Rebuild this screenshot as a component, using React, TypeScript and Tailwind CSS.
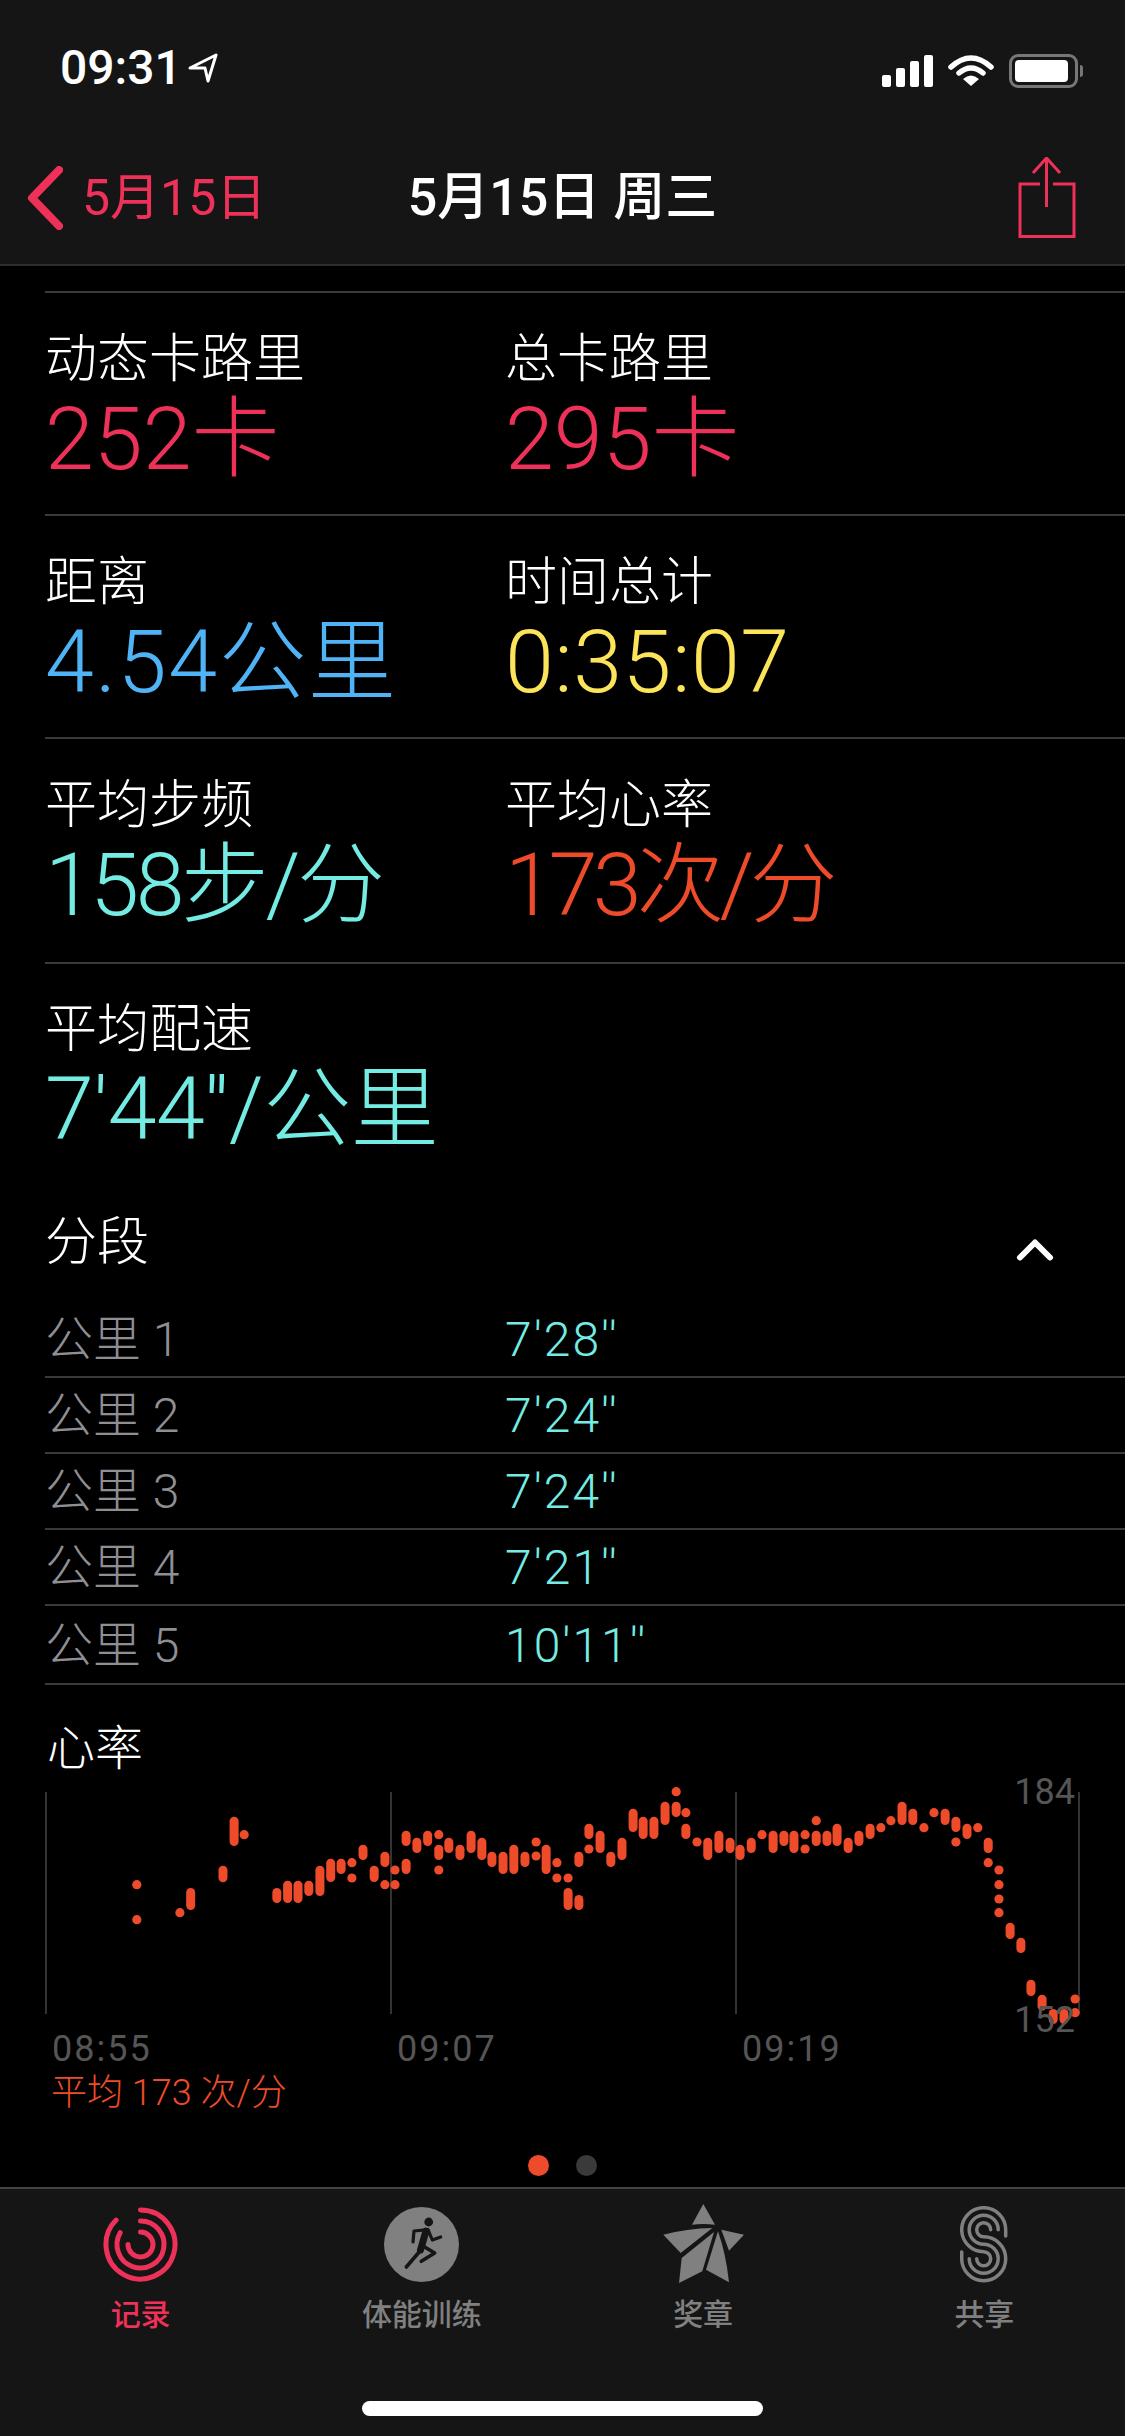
import { ChevronUp } from "lucide-react";

type Mark = [number, number, number?];

// chart marks read off the reference: [x, top, bottom], one y only means a dot
const leftMarks: Mark[] = [
	[381, 557], [381, 662], [501, 641], [531, 567, 633], [621, 500, 550], [652, 353, 441], [680, 407],
	[771, 567, 612], [801, 545, 612], [830, 545, 612], [860, 545, 591], [891, 500, 591], [921, 479, 549],
	[950, 479, 525], [980, 491], [980, 537], [1011, 437, 483], [1042, 500, 549], [1072, 458, 504], [1072, 557],
	[1100, 513], [1100, 557], [1131, 395, 441], [1131, 479, 525], [1161, 416, 462], [1191, 395, 441], [1222, 407],
	[1222, 437, 483], [1222, 513], [1250, 416, 462], [1281, 437, 483], [1312, 395, 462], [1342, 416, 483],
	[1370, 458, 504], [1401, 458, 525], [1431, 437, 525], [1462, 458, 504], [1493, 429], [1493, 471],
	[1521, 437, 525], [1551, 491], [1551, 537],
];

const rightMarks: Mark[] = [
	[17, 567, 633], [17, 537], [47, 588, 633], [47, 458, 504], [75, 450], [75, 374, 420], [106, 395, 462],
	[136, 458, 504], [167, 416, 483], [198, 329, 399], [226, 353, 420], [256, 353, 420], [287, 308, 378],
	[318, 278], [318, 308, 354], [345, 341], [345, 374, 420], [376, 429], [406, 416, 483], [437, 395, 462],
	[468, 416, 462], [496, 437, 483], [527, 416, 462], [557, 407], [588, 395, 462], [618, 395, 441],
	[646, 395, 462], [677, 407], [677, 450], [708, 395, 441], [708, 365], [738, 395, 441], [766, 374, 441],
	[797, 416, 462], [827, 395, 441], [858, 374, 420], [888, 386], [916, 365], [947, 308, 378], [977, 329, 378],
	[1008, 386], [1036, 341], [1067, 329, 378], [1097, 353, 399], [1097, 429], [1128, 374, 420], [1158, 386],
	[1187, 416, 462], [1187, 491], [1217, 513], [1217, 557], [1217, 600], [1217, 641], [1248, 671, 720],
	[1278, 716, 762], [1306, 842, 891], [1337, 887, 935], [1368, 930, 975], [1398, 930, 975], [1429, 900], [1429, 941],
];

const splits = [
	{ name: "公里 1", pace: "7'28''" },
	{ name: "公里 2", pace: "7'24''" },
	{ name: "公里 3", pace: "7'24''" },
	{ name: "公里 4", pace: "7'21''" },
	{ name: "公里 5", pace: "10'11''" },
];

function Stat({ label, value, color }: { label: string; value: string; color: string }) {
	return (
		<div>
			<div className="text-[52px] leading-[60px] font-light text-white">{label}</div>
			<div className={`mt-[4px] text-[88px] leading-[90px] font-light whitespace-nowrap ${color}`}>{value}</div>
		</div>
	);
}

function StatusBar() {
	return (
		<div className="flex h-[108px] items-end justify-between pr-[42px] pl-[60px] pb-[20px]">
			<div className="flex items-center gap-[6px]">
				<span className="text-[48px] leading-[40px] font-medium text-white">09:31</span>
				<svg width="30" height="30" viewBox="0 0 30 30" fill="none">
					<path d="M2 15 L28 2 L20 28 L17 15 Z" stroke="#fff" strokeWidth="3" strokeLinejoin="round" />
				</svg>
			</div>
			<div className="flex items-center gap-[15px]">
				<div className="flex items-end gap-[5px]">
					<div className="h-[12px] w-[9px] rounded-[2px] bg-white" />
					<div className="h-[19px] w-[9px] rounded-[2px] bg-white" />
					<div className="h-[26px] w-[9px] rounded-[2px] bg-white" />
					<div className="h-[32px] w-[9px] rounded-[2px] bg-white" />
				</div>
				<svg width="46" height="32" viewBox="0 0 46 32" fill="none">
					<path d="M3 12 Q23 -6 43 12" stroke="#fff" strokeWidth="5.5" strokeLinecap="round" />
					<path d="M11 18 Q23 8 35 18" stroke="#fff" strokeWidth="5.5" strokeLinecap="round" />
					<path d="M23 31 L15 24 Q23 17 31 24 Z" fill="#fff" />
				</svg>
				<div className="flex items-center gap-[2px]">
					<div className="flex h-[34px] w-[69px] items-center rounded-[9px] border-[3px] border-[#777] p-[3px]">
						<div className="h-full w-[53px] rounded-[4px] bg-white" />
					</div>
					<div className="h-[12px] w-[3px] rounded-r-[3px] bg-[#777]" />
				</div>
			</div>
		</div>
	);
}

function NavBar() {
	return (
		<div className="grid h-[158px] grid-cols-[1fr_auto_1fr] items-center border-b-2 border-[#2e2e2e] px-[27px] pt-[24px]">
			<div className="flex items-center gap-[19px]">
				<svg width="36" height="64" viewBox="0 0 36 64" fill="none">
					<path d="M32 4 L5 32 L32 60" stroke="#ee3158" strokeWidth="8" strokeLinecap="round" strokeLinejoin="round" />
				</svg>
				<span className="text-[50px] leading-[60px] text-[#ee3158]">5月15日</span>
			</div>
			<div className="text-center text-[52px] leading-[60px] font-medium whitespace-nowrap text-white">
				5月15日 周三
			</div>
			<div className="flex justify-end pr-[22px]">
				<svg width="58" height="82" viewBox="0 0 58 82" fill="none" stroke="#ee3158" strokeWidth="3">
					<path d="M22 27 H2 V79.5 H56 V27 H35" />
					<path d="M28.500 2 V50" />
					<path d="M15 16 L28.500 1 L42 16" />
				</svg>
			</div>
		</div>
	);
}

function HeartChart() {
	return (
		<div className="relative">
			<svg className="block h-[245px] w-full" viewBox="0 1780 1125 245">
				{[46, 391, 736, 1079].map((x) => (
					<line key={x} x1={x} x2={x} y1={1793} y2={2015} stroke="#333" strokeWidth="2" />
				))}
				{[
					...leftMarks.map(([x, a, b]): Mark => [x / 2.785, 1700 + a / 3, b === undefined ? undefined : 1700 + b / 3]),
					...rightMarks.map(([x, a, b]): Mark => [562 + x / 2.785, 1700 + a / 3, b === undefined ? undefined : 1700 + b / 3]),
				].map(([x, a, b], i) =>
					b === undefined ? (
						<circle key={i} cx={x} cy={a} r={4.6} fill="#ee4b2b" />
					) : (
						<rect key={i} x={x - 4.5} y={a} width={9} height={b - a} rx={4.5} fill="#ee4b2b" />
					),
				)}
			</svg>
			<span className="absolute top-[-7px] right-[50px] text-[36px] leading-[40px] text-[#555]">184</span>
			<span className="absolute top-[221px] right-[50px] text-[36px] leading-[40px] text-[#555]">152</span>
		</div>
	);
}

function ActivityIcon() {
	return (
		<svg width="75" height="75" viewBox="0 0 75 75" fill="none" stroke="#ee3158" strokeWidth="5" strokeLinecap="round">
			<path d="M37.500 3 A34.500 34.500 0 1 1 13.100 13.100" />
			<path d="M37.500 14 A23.500 23.500 0 1 1 17.200 25.700" />
			<path d="M37.500 25 A12.500 12.500 0 1 1 25 37.500" />
		</svg>
	);
}

function WorkoutIcon() {
	return (
		<svg width="75" height="75" viewBox="0 0 75 75" fill="none">
			<circle cx="37.500" cy="37.500" r="37.500" fill="#808080" />
			<circle cx="44.700" cy="15" r="4.400" fill="#151515" />
			<g stroke="#151515" strokeLinecap="round" strokeLinejoin="round">
				<path d="M29 35 L30 24 L44 22.700 L48.300 33 L56.700 30" strokeWidth="3.200" />
				<path d="M42 24 L36.500 43" strokeWidth="7" />
				<path d="M36 44 L22.300 60" strokeWidth="3.600" />
				<path d="M37.300 38 L50.700 46 L37.300 54.300" strokeWidth="3.600" />
			</g>
		</svg>
	);
}

function AwardsIcon() {
	return (
		<svg width="85" height="80" viewBox="0 0 85 80" fill="#808080">
			<path d="M42.300 0 L54 20.700 Q42 19.500 31 20.700 Z" />
			<path d="M2.300 30.700 Q26 24.500 51.300 24 L19.700 49 Z" />
			<path d="M53 28 L41.300 67.300 L18 79 L20.700 54 Z" />
			<path d="M57 27.300 Q65 50 68 78.300 L45 65.700 Z" />
			<path d="M60.300 25.700 L83 30.700 L68 46.700 Z" />
		</svg>
	);
}

function SharingIcon() {
	return (
		<svg width="48" height="77" viewBox="0 0 48 77" fill="none" stroke="#808080" strokeWidth="3.500" strokeLinecap="round">
			<path d="M45.700 30 V23.700 A22 22 0 1 0 23.700 45.700 A7 7 0 1 1 16.700 52.700" />
			<path d="M38.200 23.700 A14.500 14.500 0 1 0 23.700 38.200 A14.500 14.500 0 1 1 9.200 52.700" />
			<path d="M30.700 23.700 A7 7 0 1 0 23.700 30.700 A22 22 0 1 1 1.700 52.700 V46" />
		</svg>
	);
}

function TabBar() {
	const tabs = [
		{ label: "记录", icon: <ActivityIcon />, color: "text-[#ee3158]" },
		{ label: "体能训练", icon: <WorkoutIcon />, color: "text-[#808080]" },
		{ label: "奖章", icon: <AwardsIcon />, color: "text-[#808080]" },
		{ label: "共享", icon: <SharingIcon />, color: "text-[#808080]" },
	];
	return (
		<div className="mt-auto h-[249px] border-t-2 border-[#444] bg-[#151515]">
			<div className="grid grid-cols-4 pt-[15px]">
				{tabs.map((tab) => (
					<div key={tab.label} className="flex flex-col items-center">
						<div className="flex h-[80px] items-center">{tab.icon}</div>
						<div className={`mt-[13px] text-[30px] leading-[36px] font-medium ${tab.color}`}>{tab.label}</div>
					</div>
				))}
			</div>
			<div className="mx-auto mt-[68px] h-[15px] w-[401px] rounded-full bg-white" />
		</div>
	);
}

export default function App() {
	return (
		<div className="flex h-[2436px] w-[1125px] flex-col overflow-hidden bg-black font-['Roboto','Noto_Sans_CJK_SC',sans-serif]">
			<div className="bg-[#151515]">
				<StatusBar />
				<NavBar />
			</div>

			<main className="pt-[25px] pl-[45px]">
				<section className="grid h-[223px] grid-cols-[460px_1fr] border-t-2 border-[#3a3a3a] pt-[37px]">
					<Stat label="动态卡路里" value="252卡" color="text-[#ee3158]" />
					<Stat label="总卡路里" value="295卡" color="text-[#ee3158]" />
				</section>
				<section className="grid h-[223px] grid-cols-[460px_1fr] border-t-2 border-[#3a3a3a] pt-[37px]">
					<Stat label="距离" value="4.54公里" color="tracking-[1.500px] text-[#4fb3f5]" />
					<Stat label="时间总计" value="0:35:07" color="tracking-[0.500px] text-[#fbe35a]" />
				</section>
				<section className="grid h-[225px] grid-cols-[460px_1fr] border-t-2 border-[#3a3a3a] pt-[37px]">
					<Stat label="平均步频" value="158步/分" color="tracking-[-3.500px] text-[#75ece3]" />
					<Stat label="平均心率" value="173次/分" color="tracking-[-5px] text-[#ee4b2b]" />
				</section>
				<section className="h-[250px] border-t-2 border-[#3a3a3a] pt-[36px]">
					<Stat label="平均配速" value="7'44''/公里" color="tracking-[-0.500px] text-[#75ece3]" />
				</section>

				<section className="flex h-[90px] items-center justify-between pr-[60px] pb-[28px] text-[52px] leading-[60px] font-light text-white">
					<span>分段</span>
					<ChevronUp className="mt-[14px] h-[60px] w-[60px] text-white" strokeWidth={2.4} />
				</section>

				{splits.map((split, i) => (
					<div
						key={split.name}
						className={`grid grid-cols-[460px_1fr] items-center border-b-2 border-[#3a3a3a] pt-[2px] text-[48px] leading-[56px] font-light ${i === 4 ? "h-[79px]" : "h-[76px]"}`}
					>
						<span className="text-[#8e8e93]">{split.name}</span>
						<span className="tracking-[2px] text-[#75ece3]">{split.pace}</span>
					</div>
				))}
			</main>

			<div className="pt-[34px] pl-[47px] text-[48px] leading-[60px] font-light text-white">心率</div>
			<HeartChart />
			<div className="grid grid-cols-[345px_345px_1fr] pt-[5px] pl-[52px] text-[36px] leading-[40px] tracking-[2px] text-[#555]">
				<span>08:55</span>
				<span>09:07</span>
				<span>09:19</span>
			</div>
			<div className="pt-[3px] pl-[51px] text-[36px] leading-[42px] font-light text-[#ee4b2b]">平均 173 次/分</div>

			<div className="mt-[41px] flex justify-center gap-[27px]">
				<div className="h-[21px] w-[21px] rounded-full bg-[#ee4b2b]" />
				<div className="h-[21px] w-[21px] rounded-full bg-[#3a3a3a]" />
			</div>

			<TabBar />
		</div>
	);
}
